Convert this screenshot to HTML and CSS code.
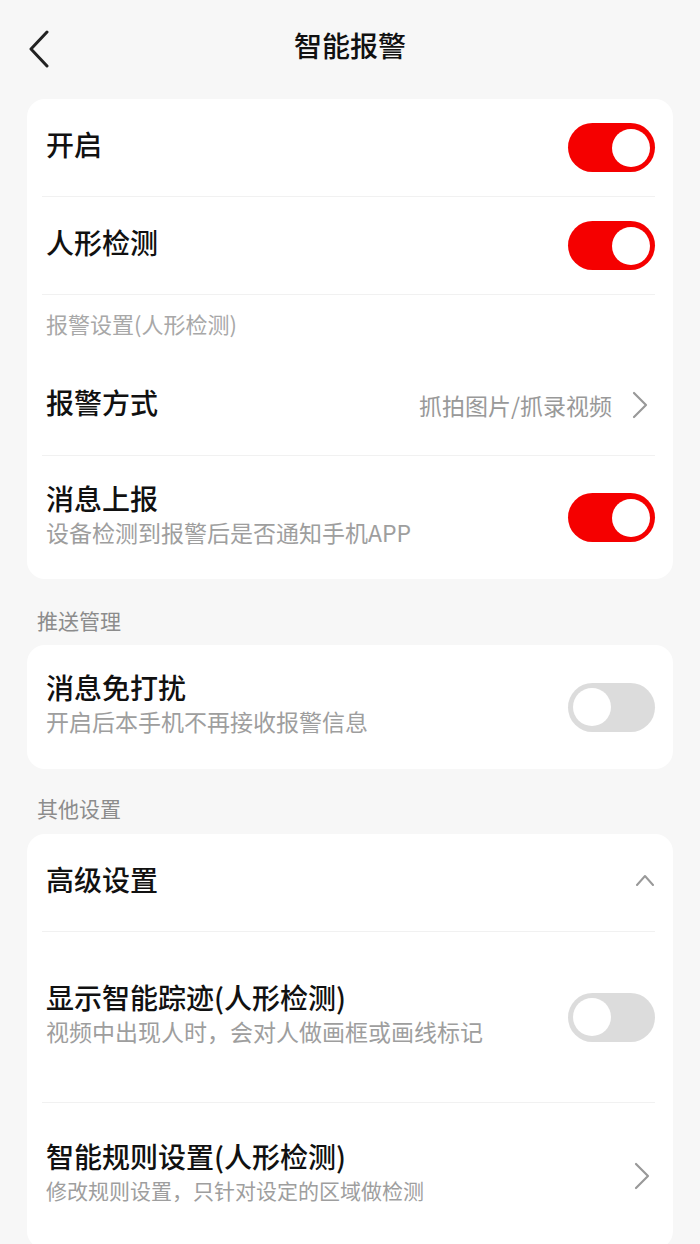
FILE: index.html
```html
<!DOCTYPE html>
<html>
    <head>
        <meta charset="UTF-8" />
        <meta name="viewport" content="width=device-width" />
        <title>智能报警</title>
        <link rel="stylesheet" href="styles.css">
    </head>
    <body>
        <header class="nav-bar">
            <a class="back" href="#">
                <svg width="22" height="38" viewBox="0 0 22 38"><path d="M19 2 L3 19 L19 36" fill="none" stroke="#222" stroke-width="3" stroke-linecap="round" stroke-linejoin="round"/></svg>
            </a>
            <h1>智能报警</h1>
            <span></span>
        </header>

        <main class="page">
            <section class="card">
                <div class="row h98">
                    <span class="row-title">开启</span>
                    <span class="switch on"></span>
                </div>
                <div class="row h98">
                    <span class="row-title">人形检测</span>
                    <span class="switch on"></span>
                </div>
                <div class="inner-label">报警设置(人形检测)</div>
                <div class="row h101">
                    <span class="row-title">报警方式</span>
                    <span class="row-value">
                        抓拍图片/抓录视频
                        <svg width="16" height="28" viewBox="0 0 16 28"><path d="M2 2 L14 14 L2 26" fill="none" stroke="#999" stroke-width="2.2" stroke-linecap="round" stroke-linejoin="round"/></svg>
                    </span>
                </div>
                <div class="row h123 last">
                    <div class="row-text">
                        <div class="row-title">消息上报</div>
                        <div class="row-sub">设备检测到报警后是否通知手机APP</div>
                    </div>
                    <span class="switch on"></span>
                </div>
            </section>

            <div class="section-label push">推送管理</div>
            <section class="card">
                <div class="row h124 last">
                    <div class="row-text">
                        <div class="row-title">消息免打扰</div>
                        <div class="row-sub">开启后本手机不再接收报警信息</div>
                    </div>
                    <span class="switch"></span>
                </div>
            </section>

            <div class="section-label">其他设置</div>
            <section class="card">
                <div class="row h98">
                    <span class="row-title">高级设置</span>
                    <svg class="arrow-up" width="20" height="12" viewBox="0 0 20 12"><path d="M2 11 L10 2 L18 11" fill="none" stroke="#999" stroke-width="2" stroke-linecap="round" stroke-linejoin="round"/></svg>
                </div>
                <div class="row h171">
                    <div class="row-text">
                        <div class="row-title">显示智能踪迹(人形检测)</div>
                        <div class="row-sub">视频中出现人时，会对人做画框或画线标记</div>
                    </div>
                    <span class="switch"></span>
                </div>
                <div class="row h146 last">
                    <div class="row-text">
                        <div class="row-title">智能规则设置(人形检测)</div>
                        <div class="row-sub small">修改规则设置，只针对设定的区域做检测</div>
                    </div>
                    <svg class="arrow-right" width="16" height="28" viewBox="0 0 16 28"><path d="M2 2 L14 14 L2 26" fill="none" stroke="#999" stroke-width="2.2" stroke-linecap="round" stroke-linejoin="round"/></svg>
                </div>
            </section>
        </main>
    </body>
</html>
```

FILE: styles.css
```css
body {
    margin: 0;
    background-color: #f7f7f7;
    font-family: "Noto Sans CJK SC", "Noto Sans", sans-serif;
    color: #111111;
}

.nav-bar {
    height: 94px;
    display: grid;
    grid-template-columns: 1fr auto 1fr;
    align-items: center;
}

.back {
    display: flex;
    padding-left: 28px;
    padding-top: 4px;
}

.nav-bar h1 {
    margin: 0;
    font-size: 28px;
    font-weight: 500;
    line-height: 34px;
    padding-bottom: 4px;
}

.page {
    padding: 5px 27px 40px 27px;
}

.card {
    background-color: #ffffff;
    border-radius: 18px;
    padding: 0 18px 0 15px;
}

.row {
    display: flex;
    align-items: center;
    justify-content: space-between;
    padding-left: 4px;
    border-bottom: 1px solid #f1f1f1;
    box-sizing: border-box;
}

.row.last {
    border-bottom: none;
}

.h98 { height: 98px; }
.h101 { height: 101px; }
.h123 { height: 123px; }
.h124 { height: 124px; }
.h171 { height: 171px; }
.h146 { height: 146px; }

.row-title {
    font-size: 28px;
    font-weight: 500;
    line-height: 35px;
    color: #111111;
}

.row > .row-title,
.row-text {
    padding-bottom: 6px;
}

.row-sub {
    font-size: 23px;
    line-height: 33px;
    color: #9e9e9e;
}

.row-sub.small {
    font-size: 21px;
}

.row-value {
    display: flex;
    align-items: center;
    gap: 20px;
    font-size: 23px;
    color: #999999;
    padding-right: 7px;
}

.inner-label {
    height: 60px;
    padding-left: 4px;
    padding-bottom: 4px;
    box-sizing: border-box;
    display: flex;
    align-items: center;
    font-size: 22px;
    color: #a8a8a8;
}

.section-label {
    padding: 25px 0 12px 10px;
    font-size: 21px;
    line-height: 28px;
    color: #8c8c8c;
}

.section-label.push {
    padding-top: 27px;
    padding-bottom: 11px;
}

.switch {
    width: 87px;
    height: 49px;
    border-radius: 25px;
    background-color: #dcdcdc;
    display: flex;
    align-items: center;
    padding: 0 5px;
    box-sizing: border-box;
}

.switch.on {
    background-color: #f50000;
    justify-content: flex-end;
}

.switch::after {
    content: "";
    width: 38px;
    height: 38px;
    border-radius: 50%;
    background-color: #ffffff;
}

.arrow-up {
    margin-right: 0;
    margin-bottom: 6px;
}

.arrow-right {
    margin-right: 5px;
}
```
